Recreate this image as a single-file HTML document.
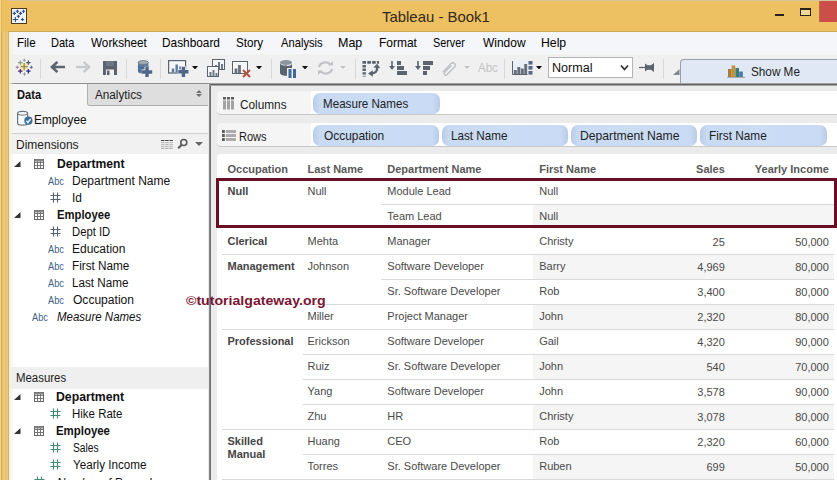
<!DOCTYPE html><html><head><meta charset="utf-8"><title>Tableau - Book1</title><style>
*{box-sizing:border-box;margin:0;padding:0}
html,body{width:837px;height:480px;overflow:hidden;background:#fff}
body{font-family:"Liberation Sans",sans-serif;position:relative}
div,svg.ic,span.tx{position:absolute}
span.tx{white-space:nowrap;line-height:normal;transform-origin:0 0}
.sep{top:59px;width:1px;height:20px;background:#d9d9d9}
#title{left:0;top:0;width:837px;height:32px;background:#edc062;border-top:1px solid #d6c49c;border-bottom:1px solid #cfa958}
#lb{left:0;top:32px;width:14px;height:448px;background:linear-gradient(90deg,#f9d684 0,#f9d684 1px,#cfa65a 1px,#cfa65a 2px,#ebc572 2px,#e9c67c 8px,#c8b080 8px,#c8b080 8.600px,#fbefd0 9px,rgba(253,246,228,0) 14px)}
#lb0{left:0;top:0;width:8px;height:32px;background:linear-gradient(90deg,#f9d684 0,#f9d684 1px,#dcae55 1px,#edc062 2px)}
#menu{left:8px;top:32px;width:829px;height:21px;background:#f5f6f9}
#tool{left:8px;top:53px;width:829px;height:31px;background:#f0f0f0;border-top:1px solid #fafafa}
#hline{left:210px;top:84px;width:627px;height:2px;background:linear-gradient(#626262 0,#626262 1px,#a4a4a4 1px,#a4a4a4 2px)}
#hline3{left:209px;top:83px;width:628px;height:1px;background:#a0a0a0}
#hline2{left:9px;top:83px;width:200px;height:1px;background:#8e8e8e}
#side{left:9px;top:84px;width:200px;height:396px;background:#fff}
#tabD{left:9px;top:84px;width:79px;height:22px;background:#f5f5f5}
#tabA{left:87px;top:84px;width:122px;height:22px;background:#dedede;border-left:1px solid #b0b0b0;border-bottom:1px solid #adadad;border-radius:0 0 0 3px}
#dsrc{left:9px;top:106px;width:200px;height:28px;background:#f5f5f5}
#dline{left:9px;top:133px;width:200px;height:1px;background:#cfcfcf}
#dimh{left:9px;top:134px;width:200px;height:20px;background:#f1f1f1}
#meah{left:9px;top:367px;width:199px;height:22px;background:#efefef}
#split{left:208px;top:84px;width:3px;height:396px;background:linear-gradient(90deg,#e6e6e6 0,#e6e6e6 1px,#8c8c8c 1px,#8c8c8c 2px,#6c6c6c 2px,#6c6c6c 3px)}
#main{left:211px;top:85px;width:626px;height:395px;background:#ebebeb}
.shelf{left:217px;width:620px;height:24px;background:#f5f5f5;border-bottom:1px solid #c8c8c8;border-radius:4px 0 0 4px}
.shelf i{position:absolute;left:94px;top:0;width:526px;height:23px;background:#fff}
#view{left:217px;top:154px;width:620px;height:326px;background:#fff;border-radius:4px 0 0 0}
.pill{height:21px;background:linear-gradient(90deg,#b9cbe6 0,#c9dbf4 7px,#cbdcf5 50%,#c9dbf4 calc(100% - 7px),#b9cbe6 100%);border-radius:7px}
.band{left:533px;width:301px;height:24px;background:#f5f5f5}
.ln{height:1px;background:#d9d9d9}
#hl{left:216px;top:178px;width:621px;height:50px;border:3px solid #6a0d25}
#showme{left:680px;top:59px;width:157px;height:25px;background:#dfe8f4;border-top:1px solid #9aa0a8;border-left:1px solid #9aa0a8;border-radius:4px 0 0 0}
.dd{left:548px;top:57px;width:85px;height:21px;background:#fff;border:1px solid #b4b4b4}
#close{left:819px;top:1px;width:18px;height:21px;background:#cb4e48;border-left:1px solid #bd6a4c}
</style></head><body>
<div id="title"></div><div id="lb0"></div>
<div id="close"></div>
<div style="left:775px;top:14px;width:9px;height:2px;background:#2a2418"></div>
<div style="left:800px;top:8px;width:11px;height:8px;border:1px solid #2a2418;border-top-width:2px;background:#f2d796"></div>
<svg class="ic" style="left:11px;top:8px" width="16" height="16" viewBox="0 0 16 16"><rect x="0.5" y="0.5" width="15" height="15" fill="#eef3f9" stroke="#4a3c1c"/><path d="M4.800000000000001 3.3H8.0M6.4 1.6999999999999997V4.9" stroke="#2f4f7f" stroke-width="1.1" fill="none"/><path d="M10.9 3.3H14.1M12.5 1.6999999999999997V4.9" stroke="#2f4f7f" stroke-width="1.1" fill="none"/><path d="M1.6999999999999997 5.4H4.9M3.3 3.8000000000000003V7.0" stroke="#2f4f7f" stroke-width="1.1" fill="none"/><path d="M7.9 5.4H11.1M9.5 3.8000000000000003V7.0" stroke="#2f4f7f" stroke-width="1.1" fill="none"/><path d="M5.800000000000001 8.3H9.0M7.4 6.700000000000001V9.9" stroke="#2f4f7f" stroke-width="1.1" fill="none"/><path d="M1.8000000000000003 11.5H7.0M4.4 8.9V14.1" stroke="#2f4f7f" stroke-width="1.1" fill="none"/><path d="M9.9 11.5H13.1M11.5 9.9V13.1" stroke="#2f4f7f" stroke-width="1.1" fill="none"/></svg>
<div id="menu"></div><div id="tool"></div>
<div id="showme"></div>
<svg class="ic" style="left:727px;top:65px" width="18" height="13" viewBox="0 0 18 13"><path d="M0 12.300H18" stroke="#9a9a9a" stroke-width="1"/><rect x="1" y="4" width="3.600" height="8" fill="#a97c33"/><rect x="4.600" y="0.500" width="3.600" height="11.500" fill="#c4923a"/><rect x="8.400" y="3" width="3.600" height="9" fill="#3c7c78"/><rect x="12.200" y="6.500" width="3.600" height="5.500" fill="#4a78a8"/></svg>
<svg class="ic" style="left:15px;top:57px" width="19" height="20" viewBox="0 0 19 20"><rect x="5.5" y="6.5" width="7.5" height="6.5" fill="#f6e3a6"/><path d="M5.6 9.7H12.799999999999999M9.2 6.1V13.299999999999999" stroke="#8d8a55" stroke-width="1.3" fill="none"/><path d="M7.700000000000001 3.3H10.9M9.3 1.6999999999999997V4.9" stroke="#9a9a9a" stroke-width="1" fill="none"/><path d="M7.9 17H11.1M9.5 15.4V18.6" stroke="#9a9a9a" stroke-width="1" fill="none"/><path d="M0.6999999999999997 10.3H3.9M2.3 8.700000000000001V11.9" stroke="#9a7aa0" stroke-width="1" fill="none"/><path d="M14.700000000000001 10.3H17.900000000000002M16.3 8.700000000000001V11.9" stroke="#5a6a9a" stroke-width="1" fill="none"/><path d="M3.0999999999999996 5.6H7.5M5.3 3.3999999999999995V7.8" stroke="#8a9a80" stroke-width="1.2" fill="none"/><path d="M11.2 5.6H15.600000000000001M13.4 3.3999999999999995V7.8" stroke="#4a5570" stroke-width="1.2" fill="none"/><path d="M3.0999999999999996 14.2H7.5M5.3 12.0V16.4" stroke="#4a2a6a" stroke-width="1.2" fill="none"/><path d="M11.2 14.2H15.600000000000001M13.4 12.0V16.4" stroke="#2a2a8a" stroke-width="1.2" fill="none"/></svg>
<div class="sep" style="left:40.0px"></div>
<div class="sep" style="left:126.0px"></div>
<div class="sep" style="left:160.0px"></div>
<div class="sep" style="left:270.5px"></div>
<div class="sep" style="left:354.5px"></div>
<div class="sep" style="left:504.3px"></div>
<div class="sep" style="left:662.5px"></div>
<svg class="ic" style="left:49px;top:60px" width="17" height="14" viewBox="0 0 17 14"><path d="M1 7 L7.5 1 L9.3 2.8 L6.2 5.7 H16 V8.3 H6.2 L9.3 11.2 L7.5 13 Z" fill="#5b636e"/></svg>
<svg class="ic" style="left:75px;top:60px" width="17" height="14" viewBox="0 0 17 14"><path d="M16 7 L9.5 1 L7.7 2.8 L10.8 5.7 H1 V8.3 H10.8 L7.7 11.2 L9.5 13 Z" fill="#c9cacc"/></svg>
<svg class="ic" style="left:103px;top:61px" width="14" height="14" viewBox="0 0 14 14"><rect x="0" y="0" width="14" height="14" fill="#5b636e"/><rect x="3" y="0" width="8" height="5" fill="#6f7782"/><rect x="3" y="8.5" width="8" height="5.5" fill="#f0f0f0"/><rect x="4" y="9.5" width="2.5" height="4.5" fill="#5b636e"/></svg>
<svg class="ic" style="left:137px;top:59px" width="17" height="19" viewBox="0 0 17 19"><path d="M1 3.500V12.500c0 1.300 2.300 2.200 5.200 2.200s5.200-0.900 5.200-2.200V3.500Z" fill="#5b789e"/><path d="M1 7c0 1.200 2.300 2 5.200 2s5.200-0.800 5.200-2M1 10.300c0 1.200 2.300 2 5.200 2" stroke="#47628a" stroke-width="1" fill="none"/><ellipse cx="6.200" cy="3.500" rx="5.200" ry="2" fill="#a4acb5" stroke="#6e7782" stroke-width="0.800"/><path d="M4.800 13H15.200M10 7.800V18.200" stroke="#f0f0f0" stroke-width="5"/><path d="M5 13H15.200M10 8V18" stroke="#4f668a" stroke-width="3.400"/></svg>
<svg class="ic" style="left:167px;top:59px" width="22" height="19" viewBox="0 0 22 19"><rect x="1.600" y="1.600" width="17" height="12.400" fill="#f4f6f8" stroke="#5b636e" stroke-width="1.200"/><path d="M6 13.500V9.500M9.700 13.500V5.500M13.400 13.500V7.500" stroke="#5f7a9a" stroke-width="2.400"/><path d="M10.800 12.800H22M16.400 7.200V18.400" stroke="#f0f0f0" stroke-width="5"/><path d="M11.300 12.800H21.500M16.400 7.700V18" stroke="#4f668a" stroke-width="3.400"/></svg>
<svg class="ic" style="left:192px;top:65.5px" width="6" height="3.5" viewBox="0 0 6 3.5"><path d="M0 0H6L3 3.500Z" fill="#111"/></svg>
<svg class="ic" style="left:206px;top:58px" width="20" height="20" viewBox="0 0 20 20"><rect x="6.5" y="1.5" width="12" height="10" fill="#f4f6f8" stroke="#5b636e"/><path d="M10 11V7M13 11V4M16 11V6" stroke="#6b7a8a" stroke-width="2"/><rect x="1.5" y="8.5" width="11" height="10" fill="#f4f6f8" stroke="#5b636e"/><path d="M4.5 18V14M7.5 18V12M10.5 18V15" stroke="#6b7a8a" stroke-width="2"/></svg>
<svg class="ic" style="left:231px;top:60px" width="21" height="19" viewBox="0 0 21 19"><rect x="1.5" y="1.5" width="15" height="12" fill="#f4f6f8" stroke="#5b636e"/><path d="M5 13V8.500M8.500 13V5" stroke="#67707c" stroke-width="2.800"/><path d="M12 10L19 17M19 10L12 17" stroke="#b4523f" stroke-width="2"/></svg>
<svg class="ic" style="left:256px;top:65.5px" width="6" height="3.5" viewBox="0 0 6 3.5"><path d="M0 0H6L3 3.500Z" fill="#111"/></svg>
<svg class="ic" style="left:279px;top:59px" width="18" height="20" viewBox="0 0 18 20"><ellipse cx="7" cy="3.5" rx="6" ry="2.6" fill="#8d949c"/><path d="M1 4V14c0 1.6 2.7 2.8 6 2.8s1-0 1-0V7c3 0 5-1.3 5-3v5H8V6.6C4 6.8 1 5.6 1 4z" fill="#5b636e"/><rect x="9.5" y="10" width="3" height="9" fill="#3f6a9a"/><rect x="14" y="10" width="3" height="9" fill="#3f6a9a"/></svg>
<svg class="ic" style="left:302px;top:65.5px" width="6" height="3.5" viewBox="0 0 6 3.5"><path d="M0 0H6L3 3.500Z" fill="#111"/></svg>
<svg class="ic" style="left:316px;top:60px" width="19" height="16" viewBox="0 0 19 16"><path d="M3 7a6.5 5.5 0 0 1 11.5-2.5M16 9a6.5 5.5 0 0 1-11.5 2.5" stroke="#c2c4c7" stroke-width="2.2" fill="none"/><path d="M12 5.5H17V1Z M7 10.5H2V15Z" fill="#c2c4c7"/></svg>
<svg class="ic" style="left:340px;top:66px" width="6" height="3" viewBox="0 0 6 3"><path d="M0 0H6L3 3Z" fill="#c2c4c7"/></svg>
<svg class="ic" style="left:362px;top:60px" width="19" height="17" viewBox="0 0 19 17"><path d="M0.5 2.3H17" stroke="#5b636e" stroke-width="2.8" stroke-dasharray="3.6 1.2"/><path d="M2.2 5V16.5" stroke="#5b636e" stroke-width="3.4" stroke-dasharray="2.4 1.2"/><path d="M15 7c0.8 4-1.5 6.5-6 6.5" stroke="#5b636e" stroke-width="2.2" fill="none"/><path d="M11.3 7.5L15.2 3.8L18.2 8.2ZM10.8 10.3L6 13.5L10.8 16.7Z" fill="#5b636e"/></svg>
<svg class="ic" style="left:389px;top:60px" width="19" height="16" viewBox="0 0 19 16"><path d="M3 1V8" stroke="#5b636e" stroke-width="1.6"/><path d="M0 6H6L3 10Z" fill="#5b636e"/><rect x="8" y="1" width="4" height="4" fill="#5b636e"/><rect x="8" y="6" width="7" height="4" fill="#5b636e"/><rect x="8" y="11" width="10" height="4" fill="#5b636e"/></svg>
<svg class="ic" style="left:415px;top:60px" width="19" height="16" viewBox="0 0 19 16"><path d="M3 1V8" stroke="#5b636e" stroke-width="1.6"/><path d="M0 6H6L3 10Z" fill="#5b636e"/><rect x="8" y="1" width="10" height="4" fill="#5b636e"/><rect x="8" y="6" width="7" height="4" fill="#5b636e"/><rect x="8" y="11" width="4" height="4" fill="#5b636e"/></svg>
<svg class="ic" style="left:440px;top:60px" width="17" height="16" viewBox="0 0 17 16"><path d="M3 12L11 3.5a2.5 2.5 0 0 1 3.8 3.2L7 14.5a1.6 1.6 0 0 1-2.4-2.2L11.5 5.5" stroke="#c2c4c7" stroke-width="1.6" fill="none"/></svg>
<svg class="ic" style="left:464px;top:66px" width="6" height="3" viewBox="0 0 6 3"><path d="M0 0H6L3 3Z" fill="#c2c4c7"/></svg>
<svg class="ic" style="left:511px;top:60px" width="22" height="16" viewBox="0 0 22 16"><rect x="1" y="0.500" width="15.500" height="14.500" fill="#e9f0f8"/><path d="M1.500 1V14.500H16.500" stroke="#5b636e" stroke-width="1" fill="none"/><path d="M4.300 14V10M7.800 14V7M11.300 14V8.500M14.700 14V4" stroke="#676f7b" stroke-width="2.900"/><rect x="17.500" y="1" width="4" height="3.600" fill="#56678a"/><rect x="17.500" y="6" width="4" height="3.600" fill="#56678a"/><rect x="17.500" y="11" width="4" height="3.600" fill="#56678a"/></svg>
<svg class="ic" style="left:536px;top:65.5px" width="6" height="3.5" viewBox="0 0 6 3.5"><path d="M0 0H6L3 3.500Z" fill="#111"/></svg>
<div class="dd"></div>
<svg class="ic" style="left:620px;top:64px" width="9" height="8" viewBox="0 0 9 8"><path d="M1 1.5L4.5 5.5L8 1.5" stroke="#333" stroke-width="1.8" fill="none"/></svg>
<svg class="ic" style="left:638px;top:61px" width="18" height="13" viewBox="0 0 18 13"><path d="M1 6.5H8" stroke="#5b636e" stroke-width="1.3"/><path d="M7 2.5L9.5 4.2H13L16 2V11L13 8.8H9.5L7 10.5Z" fill="#5b636e"/></svg>
<svg class="ic" style="left:673px;top:69px" width="7" height="6" viewBox="0 0 7 6"><path d="M0 6L6.500 0V6Z" fill="#80858c"/></svg>
<div id="side"></div><div id="tabD"></div><div id="tabA"></div><div id="dsrc"></div><div id="dline"></div><div id="dimh"></div><div id="meah"></div>
<div id="main"></div><div id="split"></div><div id="hline3"></div><div id="hline"></div><div id="hline2"></div><div id="lb"></div>
<svg class="ic" style="left:195.5px;top:90px" width="6" height="7" viewBox="0 0 6 7"><path d="M0 3L3 0L6 3ZM0 4L3 7L6 4Z" fill="#707070"/></svg>
<svg class="ic" style="left:16px;top:110px" width="18" height="17" viewBox="0 0 18 17"><path d="M1.6 3.2c0-1.100 2.200-1.900 5-1.900s5 0.800 5 1.900V13.200c0 1.100-2.200 1.900-5 1.900s-5-0.800-5-1.900Z" fill="#f6fafd" stroke="#6a727c" stroke-width="1.200"/><path d="M1.600 3.400c0 1 2.200 1.700 5 1.700s5-0.700 5-1.700" fill="none" stroke="#6a727c" stroke-width="1"/><circle cx="12.400" cy="10.700" r="4.100" fill="#3d6d99"/><path d="M10.300 10.800l1.600 1.700L14.600 9" stroke="#e8f0f8" stroke-width="1.500" fill="none"/></svg>
<svg class="ic" style="left:161px;top:139px" width="12" height="10" viewBox="0 0 12 10"><path d="M0 1.500H12" stroke="#444" stroke-width="1.200" stroke-dasharray="3.500 0.700"/><path d="M0 3.700H12M0 5.700H12M0 7.700H12M0 9.500H12" stroke="#b0b0b0" stroke-width="1" stroke-dasharray="3.500 0.700"/></svg>
<svg class="ic" style="left:177px;top:138px" width="12" height="12" viewBox="0 0 12 12"><circle cx="6.800" cy="4.500" r="3" fill="none" stroke="#555" stroke-width="1.500"/><path d="M4.700 6.800L1.200 10.300" stroke="#555" stroke-width="2"/></svg>
<svg class="ic" style="left:195px;top:142px" width="8" height="4" viewBox="0 0 8 4"><path d="M0 0H8L4 4Z" fill="#666"/></svg>
<svg class="ic" style="left:14px;top:161px" width="7" height="6" viewBox="0 0 7 6"><path d="M0 6H6.5V0Z" fill="#333"/></svg><svg class="ic" style="left:34px;top:159px" width="10" height="10" viewBox="0 0 10 10"><rect x="0.5" y="0.5" width="9" height="9" fill="#fff" stroke="#666"/><path d="M0.5 3.5H9.5M0.5 6.5H9.5M3.5 0.5V9.5M6.5 0.5V9.5" stroke="#777" stroke-width="1"/><rect x="0.5" y="0.5" width="9" height="2" fill="#888"/></svg>
<span class="tx" style="left:47.7px;top:176px;font-size:10px;color:#3f5f85;transform:scaleX(0.92)">Abc</span>
<svg class="ic" style="left:50px;top:192px" width="11" height="11" viewBox="0 0 11 11"><path d="M3.5 0.5V10.5M7.5 0.5V10.5M0.5 3.5H10.5M0.5 7.5H10.5" stroke="#566270" stroke-width="1.1" fill="none"/></svg>
<svg class="ic" style="left:14px;top:212px" width="7" height="6" viewBox="0 0 7 6"><path d="M0 6H6.5V0Z" fill="#333"/></svg><svg class="ic" style="left:34px;top:210px" width="10" height="10" viewBox="0 0 10 10"><rect x="0.5" y="0.5" width="9" height="9" fill="#fff" stroke="#666"/><path d="M0.5 3.5H9.5M0.5 6.5H9.5M3.5 0.5V9.5M6.5 0.5V9.5" stroke="#777" stroke-width="1"/><rect x="0.5" y="0.5" width="9" height="2" fill="#888"/></svg>
<svg class="ic" style="left:50px;top:226px" width="11" height="11" viewBox="0 0 11 11"><path d="M3.5 0.5V10.5M7.5 0.5V10.5M0.5 3.5H10.5M0.5 7.5H10.5" stroke="#566270" stroke-width="1.1" fill="none"/></svg>
<span class="tx" style="left:47.7px;top:244px;font-size:10px;color:#3f5f85;transform:scaleX(0.92)">Abc</span>
<span class="tx" style="left:47.7px;top:261px;font-size:10px;color:#3f5f85;transform:scaleX(0.92)">Abc</span>
<span class="tx" style="left:47.7px;top:278px;font-size:10px;color:#3f5f85;transform:scaleX(0.92)">Abc</span>
<span class="tx" style="left:47.7px;top:295px;font-size:10px;color:#3f5f85;transform:scaleX(0.92)">Abc</span>
<span class="tx" style="left:32px;top:312px;font-size:10px;color:#3f5f85;transform:scaleX(0.92)">Abc</span>
<svg class="ic" style="left:14px;top:394px" width="7" height="6" viewBox="0 0 7 6"><path d="M0 6H6.5V0Z" fill="#333"/></svg><svg class="ic" style="left:34px;top:392px" width="10" height="10" viewBox="0 0 10 10"><rect x="0.5" y="0.5" width="9" height="9" fill="#fff" stroke="#666"/><path d="M0.5 3.5H9.5M0.5 6.5H9.5M3.5 0.5V9.5M6.5 0.5V9.5" stroke="#777" stroke-width="1"/><rect x="0.5" y="0.5" width="9" height="2" fill="#888"/></svg>
<svg class="ic" style="left:50px;top:408px" width="11" height="11" viewBox="0 0 11 11"><path d="M3.5 0.5V10.5M7.5 0.5V10.5M0.5 3.5H10.5M0.5 7.5H10.5" stroke="#3f8a70" stroke-width="1.1" fill="none"/></svg>
<svg class="ic" style="left:14px;top:428px" width="7" height="6" viewBox="0 0 7 6"><path d="M0 6H6.5V0Z" fill="#333"/></svg><svg class="ic" style="left:34px;top:426px" width="10" height="10" viewBox="0 0 10 10"><rect x="0.5" y="0.5" width="9" height="9" fill="#fff" stroke="#666"/><path d="M0.5 3.5H9.5M0.5 6.5H9.5M3.5 0.5V9.5M6.5 0.5V9.5" stroke="#777" stroke-width="1"/><rect x="0.5" y="0.5" width="9" height="2" fill="#888"/></svg>
<svg class="ic" style="left:50px;top:442px" width="11" height="11" viewBox="0 0 11 11"><path d="M3.5 0.5V10.5M7.5 0.5V10.5M0.5 3.5H10.5M0.5 7.5H10.5" stroke="#3f8a70" stroke-width="1.1" fill="none"/></svg>
<svg class="ic" style="left:50px;top:459px" width="11" height="11" viewBox="0 0 11 11"><path d="M3.5 0.5V10.5M7.5 0.5V10.5M0.5 3.5H10.5M0.5 7.5H10.5" stroke="#3f8a70" stroke-width="1.1" fill="none"/></svg>
<svg class="ic" style="left:34px;top:476px" width="11" height="11" viewBox="0 0 11 11"><path d="M3.5 0.5V10.5M7.5 0.5V10.5M0.5 3.5H10.5M0.5 7.5H10.5" stroke="#3f8a70" stroke-width="1.1" fill="none"/></svg>
<div class="shelf" style="top:91px"><i></i></div><div class="shelf" style="top:123px"><i></i></div>
<svg class="ic" style="left:223px;top:97px" width="11" height="13" viewBox="0 0 11 13"><path d="M0 1.300H11" stroke="#5e5e5e" stroke-width="2.600" stroke-dasharray="3 1"/><path d="M1.500 3.600V12.500M5.500 3.600V12.500M9.500 3.600V12.500" stroke="#a2a2a2" stroke-width="3"/></svg>
<svg class="ic" style="left:222px;top:130px" width="14" height="11" viewBox="0 0 14 11"><path d="M1.400 0V11" stroke="#5e5e5e" stroke-width="2.800" stroke-dasharray="3 1"/><path d="M3.800 1.500H14M3.800 5.500H14M3.800 9.500H14" stroke="#ababab" stroke-width="3"/></svg>
<div class="pill" style="left:312.7px;top:92.6px;width:127.1px"></div>
<div class="pill" style="left:312.7px;top:124.8px;width:126.5px"></div>
<div class="pill" style="left:441.6px;top:124.8px;width:126.2px"></div>
<div class="pill" style="left:570.5px;top:124.8px;width:126.2px"></div>
<div class="pill" style="left:699.7px;top:124.8px;width:126.9px"></div>
<div id="view"></div>
<div class="band" style="top:205px"></div>
<div class="band" style="top:255px"></div>
<div class="band" style="top:305px"></div>
<div class="band" style="top:355px"></div>
<div class="band" style="top:405px"></div>
<div class="band" style="top:455px"></div>
<div class="ln" style="top:204px;left:381px;width:453px"></div>
<div class="ln" style="top:254px;left:222px;width:612px"></div>
<div class="ln" style="top:279px;left:381px;width:453px"></div>
<div class="ln" style="top:304px;left:303px;width:531px"></div>
<div class="ln" style="top:329px;left:222px;width:612px"></div>
<div class="ln" style="top:354px;left:303px;width:531px"></div>
<div class="ln" style="top:379px;left:303px;width:531px"></div>
<div class="ln" style="top:404px;left:303px;width:531px"></div>
<div class="ln" style="top:429px;left:222px;width:612px"></div>
<div class="ln" style="top:454px;left:303px;width:531px"></div>
<div class="ln" style="top:479px;left:222px;width:612px"></div>
<div id="hl"></div>
<span class="tx" style="font-size:15px;color:#33291a;left:381.5px;top:8.0px;transform:scaleX(0.9948);">Tableau - Book1</span>
<span class="tx" style="font-size:13px;color:#000;left:16.6px;top:35.0px;transform:scaleX(0.8875);">File</span>
<span class="tx" style="font-size:13px;color:#000;left:50.9px;top:35.0px;transform:scaleX(0.8483);">Data</span>
<span class="tx" style="font-size:13px;color:#000;left:90.8px;top:35.0px;transform:scaleX(0.9023);">Worksheet</span>
<span class="tx" style="font-size:13px;color:#000;left:162.1px;top:35.0px;transform:scaleX(0.9107);">Dashboard</span>
<span class="tx" style="font-size:13px;color:#000;left:235.8px;top:35.0px;transform:scaleX(0.8949);">Story</span>
<span class="tx" style="font-size:13px;color:#000;left:280.5px;top:35.0px;transform:scaleX(0.8608);">Analysis</span>
<span class="tx" style="font-size:13px;color:#000;left:338.2px;top:35.0px;transform:scaleX(0.9601);">Map</span>
<span class="tx" style="font-size:13px;color:#000;left:378.5px;top:35.0px;transform:scaleX(0.9196);">Format</span>
<span class="tx" style="font-size:13px;color:#000;left:433.3px;top:35.0px;transform:scaleX(0.8291);">Server</span>
<span class="tx" style="font-size:13px;color:#000;left:482.7px;top:35.0px;transform:scaleX(0.9200);">Window</span>
<span class="tx" style="font-size:13px;color:#000;left:541.1px;top:35.0px;transform:scaleX(0.9409);">Help</span>
<span class="tx" style="font-size:12.5px;color:#c4c4c4;left:478.4px;top:61.0px;transform:scaleX(0.9206);">Abc</span>
<span class="tx" style="font-size:12.5px;color:#111;left:551.5px;top:61.0px;transform:scaleX(1.0076);">Normal</span>
<span class="tx" style="font-size:13px;color:#222;left:751.3px;top:64.0px;transform:scaleX(0.9025);">Show Me</span>
<span class="tx" style="font-size:12.5px;color:#111;font-weight:bold;left:16.7px;top:88.0px;transform:scaleX(0.8884);">Data</span>
<span class="tx" style="font-size:12.5px;color:#222;left:95.0px;top:88.0px;transform:scaleX(0.9383);">Analytics</span>
<span class="tx" style="font-size:12.5px;color:#111;left:33.9px;top:113.0px;transform:scaleX(0.9481);">Employee</span>
<span class="tx" style="font-size:12.5px;color:#222;left:15.8px;top:137.5px;transform:scaleX(0.9586);">Dimensions</span>
<span class="tx" style="font-size:12.5px;color:#111;font-weight:bold;left:56.7px;top:157.0px;transform:scaleX(0.9716);">Department</span>
<span class="tx" style="font-size:12.5px;color:#111;left:71.7px;top:174.0px;transform:scaleX(0.9617);">Department Name</span>
<span class="tx" style="font-size:12.5px;color:#111;left:71.7px;top:191.0px;transform:scaleX(0.9501);">Id</span>
<span class="tx" style="font-size:12.5px;color:#111;font-weight:bold;left:56.7px;top:208.0px;transform:scaleX(0.9019);">Employee</span>
<span class="tx" style="font-size:12.5px;color:#111;left:71.8px;top:225.0px;transform:scaleX(0.9021);">Dept ID</span>
<span class="tx" style="font-size:12.5px;color:#111;left:71.5px;top:242.0px;transform:scaleX(0.9607);">Education</span>
<span class="tx" style="font-size:12.5px;color:#111;left:71.6px;top:259.0px;transform:scaleX(0.9391);">First Name</span>
<span class="tx" style="font-size:12.5px;color:#111;left:71.6px;top:276.0px;transform:scaleX(0.9329);">Last Name</span>
<span class="tx" style="font-size:12.5px;color:#111;left:72.5px;top:293.0px;transform:scaleX(0.9640);">Occupation</span>
<span class="tx" style="font-size:12.5px;color:#111;font-style:italic;left:56.5px;top:310.0px;transform:scaleX(0.9185);">Measure Names</span>
<span class="tx" style="font-size:12.5px;color:#222;left:15.6px;top:370.5px;transform:scaleX(0.9136);">Measures</span>
<span class="tx" style="font-size:12.5px;color:#111;font-weight:bold;left:56.0px;top:390.0px;transform:scaleX(0.9816);">Department</span>
<span class="tx" style="font-size:12.5px;color:#111;left:71.6px;top:407.0px;transform:scaleX(0.9178);">Hike Rate</span>
<span class="tx" style="font-size:12.5px;color:#111;font-weight:bold;left:56.0px;top:424.0px;transform:scaleX(0.9137);">Employee</span>
<span class="tx" style="font-size:12.5px;color:#111;left:72.5px;top:441.0px;transform:scaleX(0.8221);">Sales</span>
<span class="tx" style="font-size:12.5px;color:#111;left:72.5px;top:458.0px;transform:scaleX(0.9328);">Yearly Income</span>
<span class="tx" style="font-size:12.5px;color:#111;font-style:italic;left:57.0px;top:476.2px;transform:scaleX(0.9249);">Number of Records</span>
<span class="tx" style="font-size:13px;color:#1c1c1c;left:239.7px;top:97.0px;transform:scaleX(0.9074);">Columns</span>
<span class="tx" style="font-size:13px;color:#1c1c1c;left:238.7px;top:128.6px;transform:scaleX(0.8498);">Rows</span>
<span class="tx" style="font-size:13px;color:#222;left:322.6px;top:95.6px;transform:scaleX(0.8939);">Measure Names</span>
<span class="tx" style="font-size:13px;color:#222;left:323.5px;top:127.5px;transform:scaleX(0.9156);">Occupation</span>
<span class="tx" style="font-size:13px;color:#222;left:451.4px;top:127.5px;transform:scaleX(0.8989);">Last Name</span>
<span class="tx" style="font-size:13px;color:#222;left:580.3px;top:127.5px;transform:scaleX(0.9364);">Department Name</span>
<span class="tx" style="font-size:13px;color:#222;left:709.1px;top:127.5px;transform:scaleX(0.9081);">First Name</span>
<span class="tx" style="font-size:11px;color:#595959;font-weight:bold;left:227.5px;top:163.0px;">Occupation</span>
<span class="tx" style="font-size:11px;color:#595959;font-weight:bold;left:307.5px;top:163.0px;">Last Name</span>
<span class="tx" style="font-size:11px;color:#595959;font-weight:bold;left:387.3px;top:163.0px;">Department Name</span>
<span class="tx" style="font-size:11px;color:#595959;font-weight:bold;left:539.2px;top:163.0px;">First Name</span>
<span class="tx" style="font-size:11px;color:#595959;font-weight:bold;left:696.1px;top:163.0px;">Sales</span>
<span class="tx" style="font-size:11px;color:#595959;font-weight:bold;left:754.8px;top:163.0px;">Yearly Income</span>
<span class="tx" style="font-size:11px;color:#454545;font-weight:bold;left:227.5px;top:185.0px;">Null</span>
<span class="tx" style="font-size:11px;color:#4a4a4a;left:307.5px;top:185.0px;">Null</span>
<span class="tx" style="font-size:11px;color:#4a4a4a;left:387.3px;top:185.0px;">Module Lead</span>
<span class="tx" style="font-size:11px;color:#4a4a4a;left:539.2px;top:185.0px;">Null</span>
<span class="tx" style="font-size:11px;color:#4a4a4a;left:387.3px;top:210.0px;">Team Lead</span>
<span class="tx" style="font-size:11px;color:#4a4a4a;left:539.2px;top:210.0px;">Null</span>
<span class="tx" style="font-size:11px;color:#454545;font-weight:bold;left:227.5px;top:235.0px;">Clerical</span>
<span class="tx" style="font-size:11px;color:#4a4a4a;left:307.5px;top:235.0px;">Mehta</span>
<span class="tx" style="font-size:11px;color:#4a4a4a;left:387.3px;top:235.0px;">Manager</span>
<span class="tx" style="font-size:11px;color:#4a4a4a;left:539.2px;top:235.0px;">Christy</span>
<span class="tx" style="font-size:11px;color:#4a4a4a;left:712.6px;top:236.0px;">25</span>
<span class="tx" style="font-size:11px;color:#4a4a4a;left:795.2px;top:236.0px;">50,000</span>
<span class="tx" style="font-size:11px;color:#454545;font-weight:bold;left:227.5px;top:260.0px;">Management</span>
<span class="tx" style="font-size:11px;color:#4a4a4a;left:307.5px;top:260.0px;">Johnson</span>
<span class="tx" style="font-size:11px;color:#4a4a4a;left:387.3px;top:260.0px;">Software Developer</span>
<span class="tx" style="font-size:11px;color:#4a4a4a;left:539.2px;top:260.0px;">Barry</span>
<span class="tx" style="font-size:11px;color:#4a4a4a;left:697.3px;top:261.0px;">4,969</span>
<span class="tx" style="font-size:11px;color:#4a4a4a;left:795.2px;top:261.0px;">80,000</span>
<span class="tx" style="font-size:11px;color:#4a4a4a;left:387.3px;top:285.0px;">Sr. Software Developer</span>
<span class="tx" style="font-size:11px;color:#4a4a4a;left:539.2px;top:285.0px;">Rob</span>
<span class="tx" style="font-size:11px;color:#4a4a4a;left:697.3px;top:286.0px;">3,400</span>
<span class="tx" style="font-size:11px;color:#4a4a4a;left:795.2px;top:286.0px;">80,000</span>
<span class="tx" style="font-size:11px;color:#4a4a4a;left:307.5px;top:310.0px;">Miller</span>
<span class="tx" style="font-size:11px;color:#4a4a4a;left:387.3px;top:310.0px;">Project Manager</span>
<span class="tx" style="font-size:11px;color:#4a4a4a;left:539.2px;top:310.0px;">John</span>
<span class="tx" style="font-size:11px;color:#4a4a4a;left:697.3px;top:311.0px;">2,320</span>
<span class="tx" style="font-size:11px;color:#4a4a4a;left:795.2px;top:311.0px;">80,000</span>
<span class="tx" style="font-size:11px;color:#454545;font-weight:bold;left:227.5px;top:335.0px;">Professional</span>
<span class="tx" style="font-size:11px;color:#4a4a4a;left:307.5px;top:335.0px;">Erickson</span>
<span class="tx" style="font-size:11px;color:#4a4a4a;left:387.3px;top:335.0px;">Software Developer</span>
<span class="tx" style="font-size:11px;color:#4a4a4a;left:539.2px;top:335.0px;">Gail</span>
<span class="tx" style="font-size:11px;color:#4a4a4a;left:697.3px;top:336.0px;">4,320</span>
<span class="tx" style="font-size:11px;color:#4a4a4a;left:795.2px;top:336.0px;">90,000</span>
<span class="tx" style="font-size:11px;color:#4a4a4a;left:307.5px;top:360.0px;">Ruiz</span>
<span class="tx" style="font-size:11px;color:#4a4a4a;left:387.3px;top:360.0px;">Sr. Software Developer</span>
<span class="tx" style="font-size:11px;color:#4a4a4a;left:539.2px;top:360.0px;">John</span>
<span class="tx" style="font-size:11px;color:#4a4a4a;left:706.4px;top:361.0px;">540</span>
<span class="tx" style="font-size:11px;color:#4a4a4a;left:795.2px;top:361.0px;">70,000</span>
<span class="tx" style="font-size:11px;color:#4a4a4a;left:307.5px;top:385.0px;">Yang</span>
<span class="tx" style="font-size:11px;color:#4a4a4a;left:387.3px;top:385.0px;">Software Developer</span>
<span class="tx" style="font-size:11px;color:#4a4a4a;left:539.2px;top:385.0px;">John</span>
<span class="tx" style="font-size:11px;color:#4a4a4a;left:697.3px;top:386.0px;">3,578</span>
<span class="tx" style="font-size:11px;color:#4a4a4a;left:795.2px;top:386.0px;">90,000</span>
<span class="tx" style="font-size:11px;color:#4a4a4a;left:307.5px;top:410.0px;">Zhu</span>
<span class="tx" style="font-size:11px;color:#4a4a4a;left:387.3px;top:410.0px;">HR</span>
<span class="tx" style="font-size:11px;color:#4a4a4a;left:539.2px;top:410.0px;">Christy</span>
<span class="tx" style="font-size:11px;color:#4a4a4a;left:697.3px;top:411.0px;">3,078</span>
<span class="tx" style="font-size:11px;color:#4a4a4a;left:795.2px;top:411.0px;">80,000</span>
<span class="tx" style="font-size:11px;color:#454545;font-weight:bold;left:227.5px;top:435.0px;">Skilled</span>
<span class="tx" style="font-size:11px;color:#4a4a4a;left:307.5px;top:435.0px;">Huang</span>
<span class="tx" style="font-size:11px;color:#4a4a4a;left:387.3px;top:435.0px;">CEO</span>
<span class="tx" style="font-size:11px;color:#4a4a4a;left:539.2px;top:435.0px;">Rob</span>
<span class="tx" style="font-size:11px;color:#4a4a4a;left:697.3px;top:436.0px;">2,320</span>
<span class="tx" style="font-size:11px;color:#4a4a4a;left:795.2px;top:436.0px;">60,000</span>
<span class="tx" style="font-size:11px;color:#4a4a4a;left:307.5px;top:460.0px;">Torres</span>
<span class="tx" style="font-size:11px;color:#4a4a4a;left:387.3px;top:460.0px;">Sr. Software Developer</span>
<span class="tx" style="font-size:11px;color:#4a4a4a;left:539.2px;top:460.0px;">Ruben</span>
<span class="tx" style="font-size:11px;color:#4a4a4a;left:706.4px;top:461.0px;">699</span>
<span class="tx" style="font-size:11px;color:#4a4a4a;left:795.2px;top:461.0px;">50,000</span>
<span class="tx" style="font-size:11px;color:#454545;font-weight:bold;left:227.5px;top:448.0px;">Manual</span>
<span class="tx wm" style="font-size:12px;color:#7a1431;font-weight:bold;left:186.0px;top:294.3px;transform:scaleX(1.1775);">©tutorialgateway.org</span>
</body></html>
